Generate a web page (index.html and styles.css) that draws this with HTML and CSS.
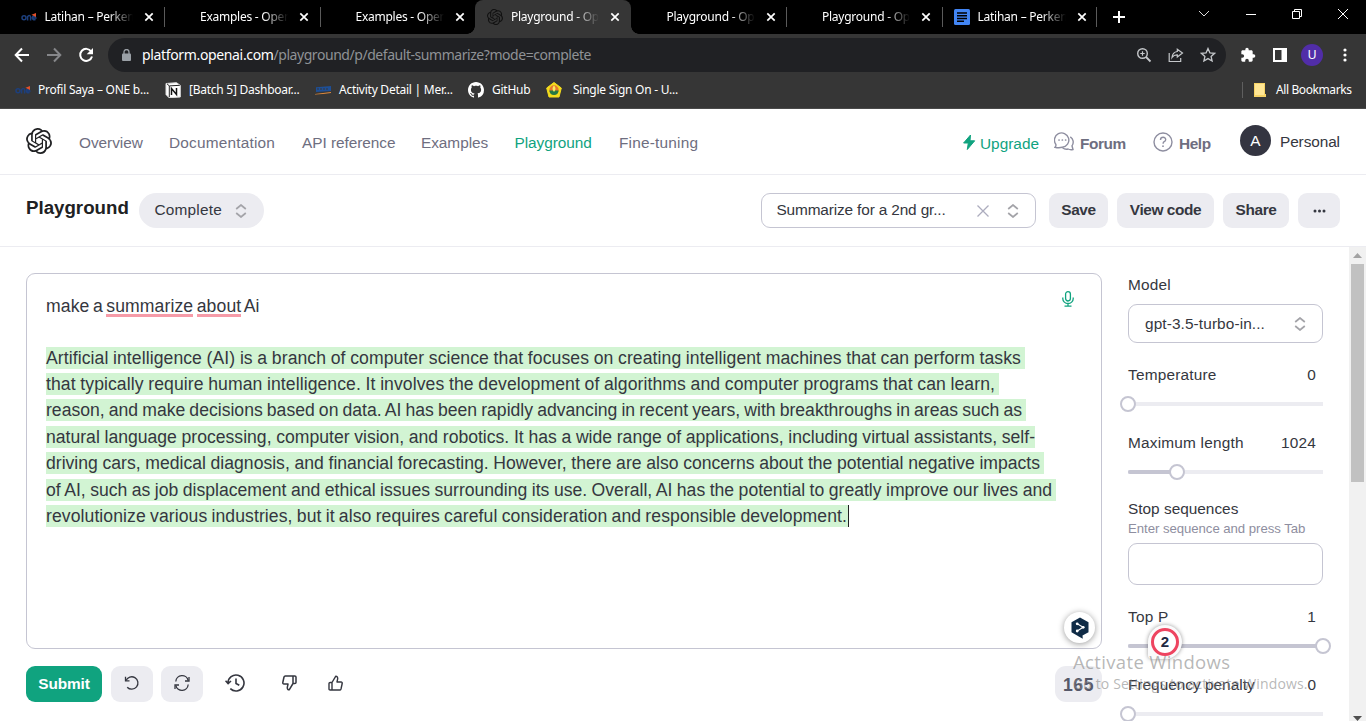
FILE: index.html
```html
<!DOCTYPE html>
<html lang="en">
<head>
<meta charset="utf-8">
<title>Playground - OpenAI API</title>
<link rel="stylesheet" href="styles.css">
</head>
<body>
<svg class="defs" width="0" height="0">
  <symbol id="openai" viewBox="0 0 24 24"><path fill="currentColor" d="M22.2819 9.8211a5.9847 5.9847 0 0 0-.5157-4.9108 6.0462 6.0462 0 0 0-6.5098-2.9A6.0651 6.0651 0 0 0 4.9807 4.1818a5.9847 5.9847 0 0 0-3.9977 2.9 6.0462 6.0462 0 0 0 .7427 7.0966 5.98 5.98 0 0 0 .511 4.9107 6.051 6.051 0 0 0 6.5146 2.9001A5.9847 5.9847 0 0 0 13.2599 24a6.0557 6.0557 0 0 0 5.7718-4.2058 5.9894 5.9894 0 0 0 3.9977-2.9001 6.0557 6.0557 0 0 0-.7475-7.0729zm-9.022 12.6081a4.4755 4.4755 0 0 1-2.8764-1.0408l.1419-.0804 4.7783-2.7582a.7948.7948 0 0 0 .3927-.6813v-6.7369l2.02 1.1686a.071.071 0 0 1 .038.052v5.5826a4.504 4.504 0 0 1-4.4945 4.4944zm-9.6607-4.1254a4.4708 4.4708 0 0 1-.5346-3.0137l.142.0852 4.783 2.7582a.7712.7712 0 0 0 .7806 0l5.8428-3.3685v2.3324a.0804.0804 0 0 1-.0332.0615L9.74 19.9502a4.4992 4.4992 0 0 1-6.1408-1.6464zM2.3408 7.8956a4.485 4.485 0 0 1 2.3655-1.9728V11.6a.7664.7664 0 0 0 .3879.6765l5.8144 3.3543-2.0201 1.1685a.0757.0757 0 0 1-.071 0l-4.8303-2.7865A4.504 4.504 0 0 1 2.3408 7.872zm16.5963 3.8558L13.1038 8.364 15.1192 7.2a.0757.0757 0 0 1 .071 0l4.8303 2.7913a4.4944 4.4944 0 0 1-.6765 8.1042v-5.6772a.79.79 0 0 0-.407-.667zm2.0107-3.0231l-.142-.0852-4.7735-2.7818a.7759.7759 0 0 0-.7854 0L9.409 9.2297V6.8974a.0662.0662 0 0 1 .0284-.0615l4.8303-2.7866a4.4992 4.4992 0 0 1 6.6802 4.66zM8.3065 12.863l-2.02-1.1638a.0804.0804 0 0 1-.038-.0567V6.0742a4.4992 4.4992 0 0 1 7.3757-3.4537l-.142.0805L8.704 5.459a.7948.7948 0 0 0-.3927.6813zm1.0976-2.3654l2.602-1.4998 2.6069 1.4998v2.9994l-2.5974 1.4997-2.6067-1.4997Z"/></symbol>
  <symbol id="close" viewBox="0 0 10 10"><path d="M1.3 1.3l7.4 7.4M8.7 1.3L1.3 8.7" stroke="currentColor" stroke-width="1.7" fill="none"/></symbol>
  <symbol id="updown" viewBox="0 0 12 14"><path d="M1.2 5L6 1l4.8 4M1.2 9L6 13l4.8-4" stroke="#a3a3a8" stroke-width="1.7" fill="none"/></symbol>
  <symbol id="one" viewBox="0 0 16 16"><g fill="none" stroke="#1d3f7c" stroke-width="1.5"><circle cx="3" cy="8.700" r="2"/><path d="M6.600 11.500V7.500q2.600-2 3 .5v3.500M11.500 8.900h3.300q-.4-2-2-2-1.500 .2-1.500 2.100 .2 2.200 3.300 1.600"/></g><path d="M10.500 5.800L15 4v4z" fill="#e2502a"/></symbol>
</svg>

<div class="tabs">
  <div class="tab"><svg class="fav"><use href="#one"/></svg><span class="tab-title">Latihan – Perkenalan</span><svg class="x"><use href="#close"/></svg></div>
  <div class="tab sep"><svg class="fav"></svg><span class="tab-title">Examples - OpenAI</span><svg class="x"><use href="#close"/></svg></div>
  <div class="tab sep"><svg class="fav"></svg><span class="tab-title">Examples - OpenAI</span><svg class="x"><use href="#close"/></svg></div>
  <div class="tab active"><svg class="fav dark"><use href="#openai"/></svg><span class="tab-title">Playground - OpenAI</span><svg class="x"><use href="#close"/></svg></div>
  <div class="tab"><svg class="fav"></svg><span class="tab-title">Playground - OpenAI</span><svg class="x"><use href="#close"/></svg></div>
  <div class="tab sep"><svg class="fav"></svg><span class="tab-title">Playground - OpenAI</span><svg class="x"><use href="#close"/></svg></div>
  <div class="tab sep last"><svg class="fav" viewBox="0 0 16 16"><rect width="16" height="16" rx="1.500" fill="#4285f4"/><path d="M3 3.900h10M3 6.700h10M3 9.500h10M3 12.300h7" stroke="#000" stroke-width="1.500"/></svg><span class="tab-title">Latihan – Perkenalan</span><svg class="x"><use href="#close"/></svg></div>
  <svg class="plus" viewBox="0 0 12 12"><path d="M6 0v12M0 6h12" stroke="#fff" stroke-width="2"/></svg>
  <div class="win">
    <svg width="12" height="8" viewBox="0 0 12 8"><path d="M1 1l5 5 5-5" fill="none" stroke="#ddd"/></svg>
    <svg width="10" height="10" viewBox="0 0 10 10"><path d="M0 5.500h10" stroke="#fff"/></svg>
    <svg width="10" height="10" viewBox="0 0 10 10"><path d="M.5 2.500h7v7h-7zM2.500 2.500v-2h7v7h-2" fill="none" stroke="#fff"/></svg>
    <svg width="10" height="10" viewBox="0 0 10 10"><path d="M0 0l10 10M10 0L0 10" fill="none" stroke="#fff"/></svg>
  </div>
</div>

<div class="toolbar">
  <svg class="tb" viewBox="0 0 16 16"><path d="M15 8H2M8 1.500L1.700 8 8 14.500" fill="none" stroke="#fff" stroke-width="2"/></svg>
  <svg class="tb" viewBox="0 0 16 16"><path d="M1 8h13M8 1.500L14.300 8 8 14.500" fill="none" stroke="#86878a" stroke-width="2"/></svg>
  <svg class="tb" viewBox="0 0 16 16"><path d="M13.200 4.500A6 6 0 1 0 14 9.500" fill="none" stroke="#fff" stroke-width="2"/><path d="M15 1v6.300H8.700z" fill="#fff"/></svg>
  <div class="omnibox">
    <svg class="lock" viewBox="0 0 9 12"><rect y="4.500" width="9" height="7.500" rx="1" fill="#9aa0a6"/><path d="M2 5V3a2.500 2.500 0 0 1 5 0v2" fill="none" stroke="#9aa0a6" stroke-width="1.300"/></svg>
    <span class="url"><b>platform.openai.com</b>/playground/p/default-summarize?mode=complete</span>
    <svg class="ob" viewBox="0 0 16 16"><circle cx="6.500" cy="6.500" r="4.800" fill="none" stroke="#c4c7ca" stroke-width="1.400"/><path d="M10 10l4.500 4.500" stroke="#c4c7ca" stroke-width="1.800"/><path d="M6.500 4.300v4.400M4.300 6.500h4.400" stroke="#c4c7ca" stroke-width="1.200"/></svg>
    <svg class="ob" viewBox="0 0 16 16"><path d="M1.200 6v8.500h11.500V11M9.300 2.200L14.500 6 9.300 10V7.800Q6 7.600 4 10.500 4.500 5.200 9.300 4.500z" fill="none" stroke="#c4c7ca" stroke-width="1.200"/></svg>
    <svg class="ob" viewBox="0 0 16 16"><path d="M8 1.500l1.900 4.300 4.700.5-3.500 3.100 1 4.600L8 11.600 3.900 14l1-4.600L1.400 6.300l4.700-.5z" fill="none" stroke="#c4c7ca" stroke-width="1.300"/></svg>
  </div>
  <svg class="puzzle" viewBox="0 0 24 24"><path fill="#fff" d="M20.500 11H19V7c0-1.100-.9-2-2-2h-4V3.500a2.500 2.500 0 0 0-5 0V5H4c-1.100 0-2 .9-2 2v3.800h1.500a2.700 2.700 0 0 1 0 5.400H2V20c0 1.100.9 2 2 2h3.800v-1.500a2.700 2.700 0 0 1 5.400 0V22H17c1.100 0 2-.9 2-2v-4h1.500a2.500 2.500 0 0 0 0-5z"/></svg>
  <svg class="panel" viewBox="0 0 14 14"><path d="M0 0h14v14H0zM2 2v10h6.500V2z" fill="#fff" fill-rule="evenodd"/></svg>
  <span class="user">U</span>
  <svg class="dots" viewBox="0 0 4 14"><g fill="#fff"><circle cx="2" cy="2" r="1.600"/><circle cx="2" cy="7" r="1.600"/><circle cx="2" cy="12" r="1.600"/></g></svg>
</div>

<div class="bookmarks">
  <svg class="fav"><use href="#one"/></svg><span class="bm1">Profil Saya – ONE b...</span>
  <svg class="fav" viewBox="0 0 16 16"><path d="M1 1.500L11.500.7 15.300 3.400V15L4 15.700 1 12.500z" fill="#fff" stroke="#ddd"/><path d="M2 1.800l2.300 2.100 10.500-.6M4.300 4v11" fill="none" stroke="#222"/><path d="M6.500 13V6.500l5 6V6" fill="none" stroke="#111" stroke-width="1.500"/></svg><span class="bm2">[Batch 5] Dashboar...</span>
  <svg class="fav" viewBox="0 0 16 16"><path d="M1 5.200L16 4v5L1 10z" fill="#1e4f96"/><path d="M0 12q8-1 16-2v1q-8 1-16 1.500z" fill="#e08a3c"/><path d="M2 7h12" stroke="#363636" stroke-dasharray="2 1"/></svg><span class="bm3">Activity Detail | Mer...</span>
  <svg class="fav" viewBox="0 0 16 16"><path fill="#fff" d="M8 0C3.580 0 0 3.580 0 8c0 3.540 2.290 6.530 5.470 7.590.4.070.55-.17.55-.38 0-.19-.01-.82-.01-1.490-2.010.37-2.530-.49-2.690-.94-.09-.23-.48-.94-.82-1.130-.28-.15-.68-.52-.01-.53.63-.01 1.080.58 1.230.82.72 1.210 1.870.87 2.330.66.070-.52.28-.87.51-1.070-1.780-.2-3.640-.89-3.640-3.950 0-.87.31-1.590.82-2.150-.08-.2-.36-1.020.08-2.120 0 0 .67-.21 2.200.82.64-.18 1.320-.27 2-.27s1.360.09 2 .27c1.530-1.040 2.200-.82 2.200-.82.44 1.100.16 1.920.08 2.120.51.56.82 1.270.82 2.150 0 3.070-1.870 3.750-3.650 3.950.29.25.54.73.54 1.480 0 1.070-.01 1.930-.01 2.200 0 .21.15.46.55.38A8.010 8.010 0 0 0 16 8c0-4.420-3.580-8-8-8z"/></svg><span class="bm4">GitHub</span>
  <svg class="fav" viewBox="0 0 16 16"><path d="M8 .5L15.300 6 13 15H3L.7 6z" fill="#f3dc1c" stroke="#f3dc1c" stroke-width="1" stroke-linejoin="round"/><circle cx="8" cy="8" r="4.700" fill="#e6772e"/><path d="M3.300 8.500h9.400Q12 13 8 13T3.300 8.500z" fill="#247943"/><path d="M8 3.500q3 3 0 6.500-3-3.500 0-6.500z" fill="#f8ec60"/></svg><span class="bm5">Single Sign On - U...</span>
  <span class="bm-sep"></span>
  <svg class="folder" viewBox="0 0 12 14"><path d="M0 0h11v11h1v3H0z" fill="#f6d365"/><path d="M1 1h9v11H1z" fill="#ffe694"/></svg><span class="bm6">All Bookmarks</span>
</div>

<header class="header">
  <svg class="logo"><use href="#openai"/></svg>
  <nav class="nav"><a>Overview</a><a class="wide">Documentation</a><a>API reference</a><a>Examples</a><a class="current">Playground</a><a class="wide">Fine-tuning</a></nav>
  <div class="account">
    <svg width="14" height="16" viewBox="0 0 14 16"><path d="M8.500 1L1.600 9H6.300L5.300 15.500 12.700 6.800H8z" fill="#10a37f" stroke="#10a37f" stroke-linejoin="round"/></svg>
    <span class="upgrade">Upgrade</span>
    <svg width="20" height="20" viewBox="0 0 20 20"><g fill="none" stroke="#8e8ea0" stroke-width="1.400"><path d="M1 15.200Q2.200 14.200 1.900 12.500A7.200 7.200 0 1 1 8.300 15.300Q4.700 16.200 1 15.200z"/><path d="M16.300 4.800a6.300 6.300 0 0 1 1.700 9l1 3.700q-3 .6-5-.5-3 .7-5.500-1.200"/></g><path d="M5 8h.1M8.300 8h.1M11.600 8h.1" stroke="#8e8ea0" stroke-width="1.700" stroke-linecap="round"/></svg>
    <span class="strong">Forum</span>
    <svg width="20" height="20" viewBox="0 0 20 20"><g fill="none" stroke="#8e8ea0" stroke-width="1.400"><circle cx="10" cy="10" r="9"/><path d="M7.500 8q0-2.700 2.600-2.700T12.700 7.800Q12.600 9 11.200 9.700 10.100 10.400 10.100 11.700"/></g><circle cx="10" cy="14.200" r=".9" fill="#8e8ea0"/></svg>
    <span class="strong">Help</span>
    <span class="avatar">A</span>
    <span class="personal">Personal</span>
  </div>
</header>

<div class="subheader">
  <h1>Playground</h1>
  <div class="mode"><span>Complete</span><svg class="ud"><use href="#updown"/></svg></div>
  <div class="preset"><span>Summarize for a 2nd gr...</span><svg class="clear" viewBox="0 0 12 12"><path d="M.5.5l11 11M11.500.5l-11 11" stroke="#acacbe" stroke-width="1.300"/></svg><svg class="ud"><use href="#updown"/></svg></div>
  <button class="btn save">Save</button>
  <button class="btn view">View code</button>
  <button class="btn share">Share</button>
  <button class="btn more"><svg width="13" height="4" viewBox="0 0 13 4"><g fill="#353740"><circle cx="2" cy="2" r="1.500"/><circle cx="6.500" cy="2" r="1.500"/><circle cx="11" cy="2" r="1.500"/></g></svg></button>
</div>

<div class="content">
  <main class="main">
    <div class="editor">
      <svg class="mic" viewBox="0 0 12 16"><g fill="none" stroke="#10a37f" stroke-width="1.300"><rect x="3.600" y=".7" width="4.800" height="9.300" rx="2.400"/><path d="M.8 6.500v1.300a5.200 4.700 0 0 0 10.400 0V6.500M6 12.500v2.700M2.500 15.200h7"/></g></svg>
      <p class="prompt">make a <u>summarize</u> <u>about</u> Ai</p>
      <div class="line"><mark class="l1">Artificial intelligence (AI) is a branch of computer science that focuses on creating intelligent machines that can perform tasks</mark></div>
      <div class="line"><mark class="l2">that typically require human intelligence. It involves the development of algorithms and computer programs that can learn,</mark></div>
      <div class="line"><mark class="l3">reason, and make decisions based on data. AI has been rapidly advancing in recent years, with breakthroughs in areas such as</mark></div>
      <div class="line"><mark class="l4">natural language processing, computer vision, and robotics. It has a wide range of applications, including virtual assistants, self-</mark></div>
      <div class="line"><mark class="l5">driving cars, medical diagnosis, and financial forecasting. However, there are also concerns about the potential negative impacts</mark></div>
      <div class="line"><mark class="l6">of AI, such as job displacement and ethical issues surrounding its use. Overall, AI has the potential to greatly improve our lives and</mark></div>
      <div class="line"><mark class="l7">revolutionize various industries, but it also requires careful consideration and responsible development.</mark></div>
      <span class="deepl"><svg width="20" height="22" viewBox="0 0 20 22"><path d="M10 .5l8.500 4.700v10.100l-6 3.200.3 3.200-4-2.200L1.500 15.300V5.200z" fill="#0f2b46"/><path d="M7.200 6.700l6 3.600-6 3.700" fill="none" stroke="#fff" stroke-width="1.100"/><circle cx="7.200" cy="6.800" r="1.400" fill="#fff"/><circle cx="13.200" cy="10.300" r="1.400" fill="#fff"/><circle cx="7.200" cy="14" r="1.400" fill="#fff"/></svg></span>
    </div>
    <div class="actions">
      <button class="submit">Submit</button>
      <button class="btn sq"><svg width="16" height="16" viewBox="0 0 16 16"><g fill="none" stroke="#353740" stroke-width="1.300"><path d="M1.500 1.800v4h4"/><path d="M2 5.600A6.200 6.200 0 1 1 3.200 12.200"/></g></svg></button>
      <button class="btn sq second"><svg width="16" height="16" viewBox="0 0 16 16"><g fill="none" stroke="#353740" stroke-width="1.300"><path d="M15 2v4h-4M1 14v-4h4"/><path d="M1.800 6.500A6.300 6.300 0 0 1 14.200 5.500M14.200 9.500A6.300 6.300 0 0 1 1.800 10.500"/></g></svg></button>
      <svg class="hist" width="20" height="18" viewBox="0 0 20 18"><g fill="none" stroke="#353740" stroke-width="1.600"><path d="M3 9a8 8 0 1 1 2.300 5.600M.5 6.700L3.100 9.600 6 7"/><path d="M11 4.500v5l3.300 1.800"/></g></svg>
      <svg class="down" width="15" height="16" viewBox="0 0 15 16"><path d="M11 1H3.300Q2.300 1 2 2L.8 7.500Q.6 9 2 9h4l-.7 3.300Q5.200 14.800 7.200 14.800L11 8.500V1h1.800Q14 1 14 2v5.500q0 1-1.200 1H11" fill="none" stroke="#353740" stroke-width="1.500" stroke-linejoin="round"/></svg>
      <svg class="up" width="15" height="16" viewBox="0 0 15 16"><path d="M4 15h7.700q1 0 1.300-1l1.200-5.500Q14.400 7 13 7H9l.7-3.300Q9.800 1.200 7.800 1.200L4 7.500V15H2.200Q1 15 1 14V8.500q0-1 1.200-1H4" fill="none" stroke="#353740" stroke-width="1.400" stroke-linejoin="round"/></svg>
      <span class="count">165</span>
    </div>
  </main>
  <aside class="side">
    <div class="label"><span>Model</span></div>
    <div class="select"><span>gpt-3.5-turbo-in...</span><svg class="ud"><use href="#updown"/></svg></div>
    <div class="label temp"><span>Temperature</span><span>0</span></div>
    <div class="slider"><i></i><b></b></div>
    <div class="label max"><span>Maximum length</span><span>1024</span></div>
    <div class="slider quarter"><i></i><b></b></div>
    <div class="label stop"><span>Stop sequences</span></div>
    <div class="hint">Enter sequence and press Tab</div>
    <div class="input"></div>
    <div class="label top"><span>Top P</span><span>1</span></div>
    <div class="slider full"><i></i><b></b></div>
    <div class="label freq"><span>Frequency penalty</span><span>0</span></div>
    <div class="slider"><i></i><b></b></div>
  </aside>
  <div class="scroll">
    <svg width="9" height="5" viewBox="0 0 9 5"><path d="M4.500 0L9 5H0z" fill="#a3a3a3"/></svg>
    <div class="thumb"></div>
    <svg class="arrow" width="9" height="5" viewBox="0 0 9 5"><path d="M0 0h9L4.500 5z" fill="#505050"/></svg>
  </div>
</div>

<div class="grammar"><span>2</span></div>
<div class="watermark"><div class="w1">Activate Windows</div><div class="w2">Go to Settings to activate Windows.</div></div>
</body>
</html>
```
FILE: styles.css
```css
* { box-sizing: border-box; }
body { margin: 0; width: 1366px; height: 721px; overflow: hidden; position: relative; background: #fff; color: #353740; font: 15.4px/22px "Liberation Sans", Arial, sans-serif; white-space: nowrap; }
svg { display: block; flex: none; }
.defs { position: absolute; }
button { font: inherit; border: 0; padding: 0; }

/* browser chrome */
.tabs { height: 34px; background: #000; display: flex; padding-left: 8.500px; color: #fff; font: 12px/16px "Noto Sans", "Open Sans", sans-serif; }
.tab { width: 155.500px; flex: none; display: flex; align-items: center; padding-left: 12px; position: relative; }
.fav { width: 16px; height: 16px; }
.fav.dark { color: #111; }
.tab-title { width: 88px; margin-left: 8px; overflow: hidden; letter-spacing: -.25px; -webkit-mask-image: linear-gradient(90deg, #000 72%, transparent); mask-image: linear-gradient(90deg, #000 72%, transparent); }
.x { width: 10px; height: 10px; margin-left: 11px; }
.tab.sep::before, .tab.last::after { content: ""; position: absolute; left: 0; top: 7px; width: 1px; height: 20px; background: #5a5a5a; }
.tab.last::after { left: auto; right: 0; }
.tab.active { background: #363636; border-radius: 8px 8px 0 0; }
.tab.active::before, .tab.active::after { content: ""; position: absolute; bottom: 0; width: 8px; height: 8px; left: -8px; background: radial-gradient(circle at 0 0, transparent 7.500px, #363636 8px); }
.tab.active::after { left: auto; right: -8px; background: radial-gradient(circle at 100% 0, transparent 7.500px, #363636 8px); }
.plus { width: 12px; height: 12px; margin: 11px 0 0 16px; }
.win { margin: 9px 18px 0 auto; width: 150px; height: 10px; display: flex; justify-content: space-between; align-items: center; }
.toolbar { height: 42px; background: #363636; display: flex; align-items: center; padding-left: 14px; }
.tb { width: 16px; height: 16px; margin-right: 16px; }
.omnibox { width: 1118px; height: 34px; margin-left: -2px; border-radius: 17px; background: #202124; display: flex; align-items: center; padding: 0 10px 0 14px; }
.lock { width: 9px; height: 12px; }
.url { flex: 1; margin-left: 11px; font: 14px/20px "Noto Sans", "Open Sans", sans-serif; color: #8f9296; letter-spacing: -.45px; }
.url b { font-weight: 400; color: #fff; letter-spacing: -.35px; }
.ob { width: 16px; height: 16px; margin-left: 16px; }
.puzzle { width: 16px; height: 16px; margin-left: 14px; }
.panel { width: 14px; height: 14px; margin-left: 17px; }
.user { width: 22px; height: 22px; border-radius: 50%; background: #512da8; color: #fff; font: 12px/22px "Liberation Sans", sans-serif; text-align: center; margin-left: 14px; }
.dots { width: 4px; height: 14px; margin-left: 20px; }
.bookmarks { height: 33px; background: #363636; display: flex; align-items: center; padding: 0 0 5px 15px; color: #fff; font: 12px/16px "Noto Sans", "Open Sans", sans-serif; letter-spacing: -.25px; border-bottom: 1px solid #4a4a4a; }
.bookmarks span { margin-left: 7px; flex: none; }
.bm1 { width: 127px; } .bm2 { width: 126px; } .bm3 { width: 129px; } .bm4 { width: 54px; }
.bookmarks .bm2, .bookmarks .bm3, .bookmarks .bm4 { margin-left: 8px; }
.bookmarks .bm5 { margin-left: 11px; }
.bookmarks .bm-sep { width: 1px; height: 16px; background: #5f5f5f; margin-left: auto; margin-right: 11px; }
.folder { width: 12px; height: 14px; }
.bookmarks .bm6 { width: 76px; margin: 0 14px 0 10px; letter-spacing: -.4px; }

/* site header */
.header { height: 66px; border-bottom: 1px solid #ececf1; display: flex; align-items: center; padding: 0 26px; color: #6e6e80; }
.logo { width: 26px; height: 26px; color: #202123; margin-bottom: 2px; }
.nav { display: grid; grid-template-columns: 90px 133px 119px 93.500px 104.500px auto; margin: 3px 0 0 27px; letter-spacing: -.05px; }
.nav .wide { letter-spacing: .2px; }
.nav .current, .upgrade { color: #10a37f; }
.account { margin-left: auto; display: grid; grid-template-columns: 18px 74px 26px 73px 26px 61px 40px 60px; align-items: center; }
.upgrade, .strong { padding-top: 5px; }
.strong { font-weight: 700; letter-spacing: -.4px; }
.avatar { width: 31px; height: 31px; border-radius: 50%; background: #343541; color: #fff; text-align: center; line-height: 31px; margin-top: -2px; }
.personal { color: #353740; letter-spacing: -.1px; }

.subheader { height: 72px; border-bottom: 1px solid #ececf1; display: flex; align-items: center; padding: 0 26px; }
h1 { margin: 0; width: 113px; font-size: 18.700px; line-height: 24px; color: #202123; padding-bottom: 6px; }
.mode { width: 125px; height: 35px; border-radius: 18px; background: #ececf1; display: flex; align-items: center; justify-content: space-between; padding: 0 17px 0 15.500px; letter-spacing: .2px; }
.mode span, .preset span { margin-top: -2px; }
.ud { width: 12px; height: 14px; }
.preset { width: 275px; height: 35px; margin-left: auto; margin-right: 4px; border: 1px solid #c5c5d2; border-radius: 9px; display: flex; align-items: center; padding: 0 16px 0 14.500px; letter-spacing: -.15px; }
.clear { width: 12px; height: 12px; margin: 0 18px 0 auto; }
.btn { height: 35px; margin-left: 9px; border-radius: 9px; background: #ececf1; color: #353740; font-weight: 700; letter-spacing: -.4px; display: flex; align-items: center; justify-content: center; }
.save, .view, .share { padding-bottom: 2px; }
.save { width: 59px; } .view { width: 97px; } .share { width: 66px; } .more { width: 42px; }

.content { height: 474px; display: flex; }
.main { width: 1076px; margin-left: 26px; padding-top: 26px; }
.editor { height: 376px; border: 1px solid #c5c5d2; border-radius: 9px; position: relative; padding: 19px 19px 0; font-size: 17.600px; line-height: 26.400px; }
.mic { position: absolute; left: 1035px; top: 17px; width: 12px; height: 16px; }
.prompt { margin: 0 0 25px; height: 26.400px; letter-spacing: .1px; word-spacing: -1.500px; }
.prompt u { text-decoration: none; padding-bottom: 0; background: linear-gradient(#f69ba8, #f69ba8) 0 100% / 100% 3px no-repeat; line-height: 20px; padding-bottom: 1px; }
.line { height: 26.400px; display: flex; align-items: center; }
mark { display: block; height: 22px; line-height: 23px; background: #d2f4d3; color: inherit; text-align: justify; text-align-last: justify; white-space: normal; word-spacing: -1.600px; padding-right: 4px; }
.l1, .l2, .l3, .l7 { letter-spacing: .08px; }
.l1 { width: 979px; } .l2 { width: 953px; } .l3 { width: 980px; letter-spacing: 0; } .l4 { width: 989px; padding-right: 0; } .l5 { width: 998px; } .l6 { width: 1010px; }
.l7 { width: 803px; padding-right: 1px; border-right: 1px solid #202123; }
.deepl { position: absolute; left: 1037px; top: 338px; width: 31px; height: 31px; border-radius: 50%; background: #fff; box-shadow: 0 1px 6px rgba(0,0,0,.4); display: flex; align-items: center; justify-content: center; }
.actions { display: flex; align-items: center; margin-top: 17px; height: 36px; }
.submit { width: 76px; height: 36px; border-radius: 9px; background: #10a37f; color: #fff; font-weight: 700; letter-spacing: -.1px; }
.sq { width: 42px; height: 36px; padding-bottom: 2px; }
.second { margin-left: 8px; }
.hist { margin-left: 22px; } .down { margin-left: 37px; } .up { margin-left: 31px; }
.hist, .down, .up { margin-bottom: 2px; }
.count { margin-left: auto; width: 47px; height: 36px; border-radius: 11px; background: #ececf1; color: #565869; font: 700 17.600px/38px "Liberation Sans", sans-serif; letter-spacing: .6px; text-align: center; }

.side { width: 195px; margin-left: 26px; padding-top: 27px; }
.label { display: flex; justify-content: space-between; padding-right: 7px; height: 22px; letter-spacing: .2px; }
.select { height: 39px; margin-top: 8px; border: 1px solid #c5c5d2; border-radius: 9px; display: flex; align-items: center; justify-content: space-between; padding: 0 16px; letter-spacing: .1px; }
.temp, .top { margin-top: 21px; }
.max, .freq { margin-top: 10px; }
.freq { letter-spacing: 0; }
.stop { margin-top: 8px; letter-spacing: 0; }
.hint { font-size: 13.200px; line-height: 18px; color: #8e8ea0; letter-spacing: -.05px; }
.input { height: 42px; margin-top: 5px; border: 1px solid #c5c5d2; border-radius: 9px; }
.slider { height: 36px; display: flex; align-items: center; background: linear-gradient(#ececf1, #ececf1) 0 50% / 100% 4px no-repeat; }
.slider i { height: 4px; width: 0; flex: none; background: #c5c5d2; border-radius: 2px; }
.slider b { width: 16px; height: 16px; margin-left: -8px; flex: none; border: 2px solid #c5c5d2; border-radius: 50%; background: #fff; }
.quarter i { width: 49px; } .full i { width: 195px; }
.scroll { width: 17px; margin-left: auto; background: #f1f1f1; display: flex; flex-direction: column; align-items: center; padding-top: 6px; }
.thumb { width: 13px; height: 219px; margin-top: 6px; background: #c1c1c1; }
.arrow { margin-top: 234px; }

/* floating overlays */
.grammar { position: absolute; left: 1148px; top: 625px; width: 34px; height: 34px; border-radius: 50% 50% 50% 4px; background: #fafafb; box-shadow: 0 0 4px rgba(0,0,0,.4); padding: 3px; }
.grammar span { display: block; width: 28px; height: 28px; border: 3px solid #ee4460; border-radius: 50%; background: #fff; color: #202942; font: 700 15px/22px "Liberation Sans", sans-serif; text-align: center; }
.watermark { position: absolute; left: 1073px; top: 649px; color: rgba(135,135,135,.6); font-family: "Open Sans", "Noto Sans", sans-serif; }
.w1 { font-size: 18.500px; line-height: 25px; letter-spacing: .35px; }
.w2 { font-size: 14px; line-height: 20px; letter-spacing: .15px; }
```
